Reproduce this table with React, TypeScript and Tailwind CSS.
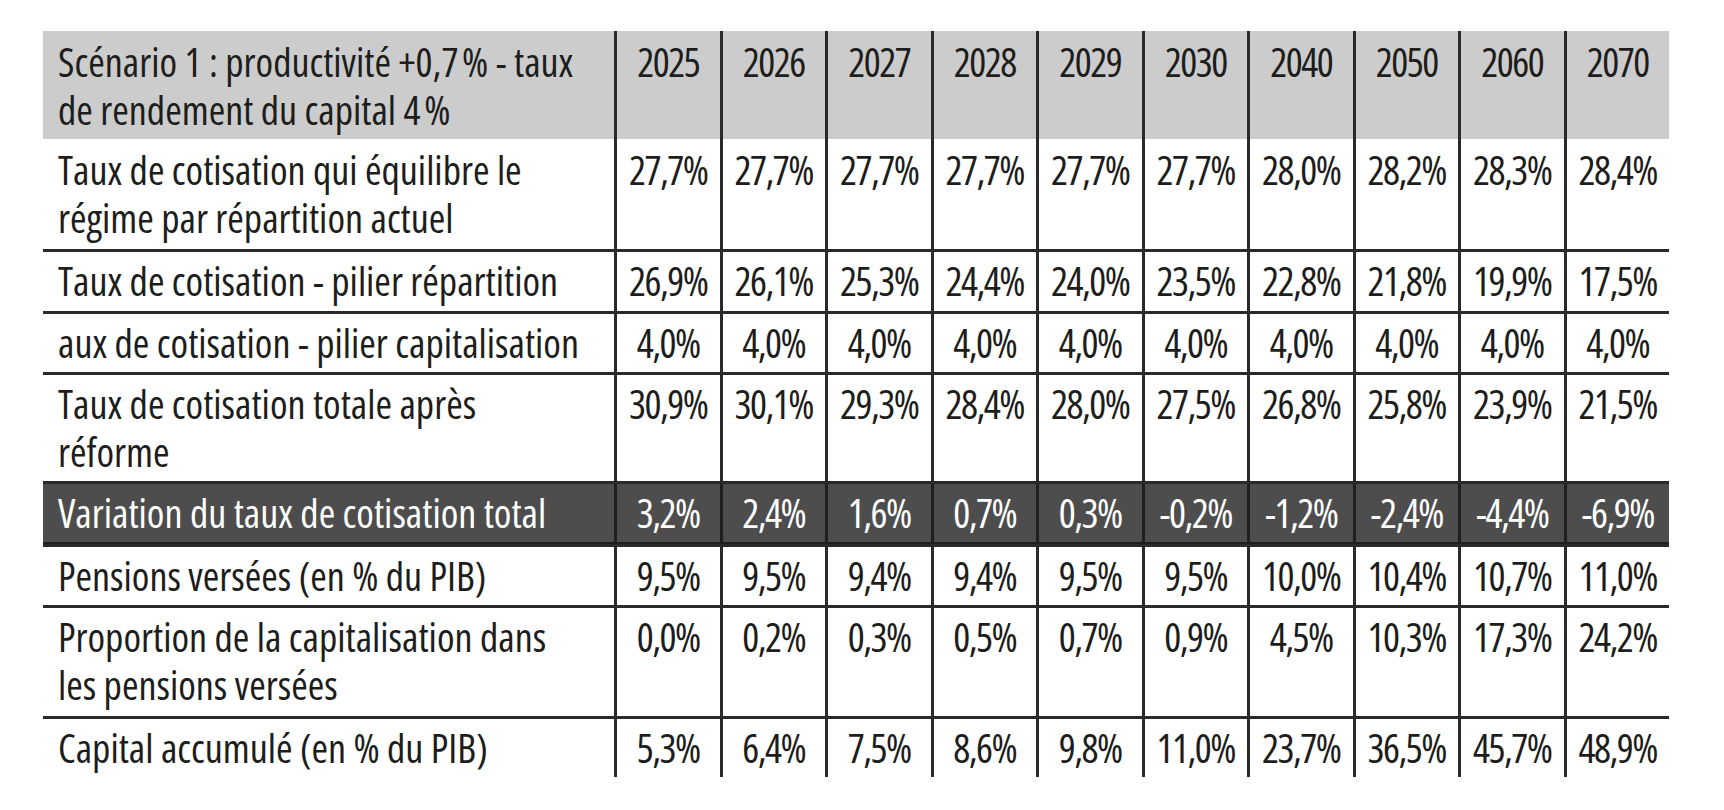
import React from "react";

const years = ["2025", "2026", "2027", "2028", "2029", "2030", "2040", "2050", "2060", "2070"];

type Row = { label: React.ReactNode; values: string[]; h: string; dark?: boolean; first?: boolean };

const rows: Row[] = [
  {
    label: (
      <>
        Taux de cotisation qui équilibre le
        <br />
        régime par répartition actuel
      </>
    ),
    values: ["27,7%", "27,7%", "27,7%", "27,7%", "27,7%", "27,7%", "28,0%", "28,2%", "28,3%", "28,4%"],
    h: "h-[110px]",
    first: true,
  },
  {
    label: "Taux de cotisation - pilier répartition",
    values: ["26,9%", "26,1%", "25,3%", "24,4%", "24,0%", "23,5%", "22,8%", "21,8%", "19,9%", "17,5%"],
    h: "h-[62px]",
  },
  {
    label: "aux de cotisation - pilier capitalisation",
    values: ["4,0%", "4,0%", "4,0%", "4,0%", "4,0%", "4,0%", "4,0%", "4,0%", "4,0%", "4,0%"],
    h: "h-[61px]",
  },
  {
    label: (
      <>
        Taux de cotisation totale après
        <br />
        réforme
      </>
    ),
    values: ["30,9%", "30,1%", "29,3%", "28,4%", "28,0%", "27,5%", "26,8%", "25,8%", "23,9%", "21,5%"],
    h: "h-[109px]",
  },
  {
    label: "Variation du taux de cotisation total",
    values: ["3,2%", "2,4%", "1,6%", "0,7%", "0,3%", "-0,2%", "-1,2%", "-2,4%", "-4,4%", "-6,9%"],
    h: "h-[63px]",
    dark: true,
  },
  {
    label: "Pensions versées (en % du PIB)",
    values: ["9,5%", "9,5%", "9,4%", "9,4%", "9,5%", "9,5%", "10,0%", "10,4%", "10,7%", "11,0%"],
    h: "h-[61px]",
  },
  {
    label: (
      <>
        Proportion de la capitalisation dans
        <br />
        les pensions versées
      </>
    ),
    values: ["0,0%", "0,2%", "0,3%", "0,5%", "0,7%", "0,9%", "4,5%", "10,3%", "17,3%", "24,2%"],
    h: "h-[111px]",
  },
  {
    label: "Capital accumulé (en % du PIB)",
    values: ["5,3%", "6,4%", "7,5%", "8,6%", "9,8%", "11,0%", "23,7%", "36,5%", "45,7%", "48,9%"],
    h: "h-[61px]",
  },
];

export default function App() {
  return (
    <div className="w-[1724px] h-[810px] bg-white overflow-hidden pt-[31px] pl-[43px] font-['Open_Sans',sans-serif] [font-stretch:75%]">
      <div className="w-[1626px] text-[40px] leading-[48px] text-[#1d1d1b]">
        {/* header */}
        <div className="grid grid-cols-[571px_repeat(10,minmax(0,1fr))] h-[108px] bg-[#cccccc]">
          <div className="pl-[15px] pt-[7px] whitespace-nowrap">
            Scénario 1 : productivité +0,7&#8239;% - taux
            <br />
            de rendement du capital 4&#8239;%
          </div>
          {years.map((y) => (
            <div key={y} className="border-l-[3px] border-[#2a2a2a] pt-[7px] text-center tracking-[-1.5px]">
              {y}
            </div>
          ))}
        </div>
        {rows.map((r, i) => (
          <div
            key={i}
            className={`grid grid-cols-[571px_repeat(10,minmax(0,1fr))] ${r.h} ${
              r.first ? "" : "border-t-[3px] border-[#2a2a2a]"
            } ${r.dark ? "bg-[#4d4d4d] text-white border-b-[2px] border-b-[#1f1f1f]" : ""}`}
          >
            <div className={`pl-[15px] whitespace-nowrap ${r.first ? "pt-[7px]" : "pt-[5px]"}`}>{r.label}</div>
            {r.values.map((v, j) => (
              <div
                key={j}
                className={`border-l-[3px] ${r.dark ? "border-[#1f1f1f]" : "border-[#2a2a2a]"} ${
                  r.first ? "pt-[7px]" : "pt-[5px]"
                } text-center tracking-[-1.5px] whitespace-nowrap`}
              >
                {v}
              </div>
            ))}
          </div>
        ))}
      </div>
    </div>
  );
}
